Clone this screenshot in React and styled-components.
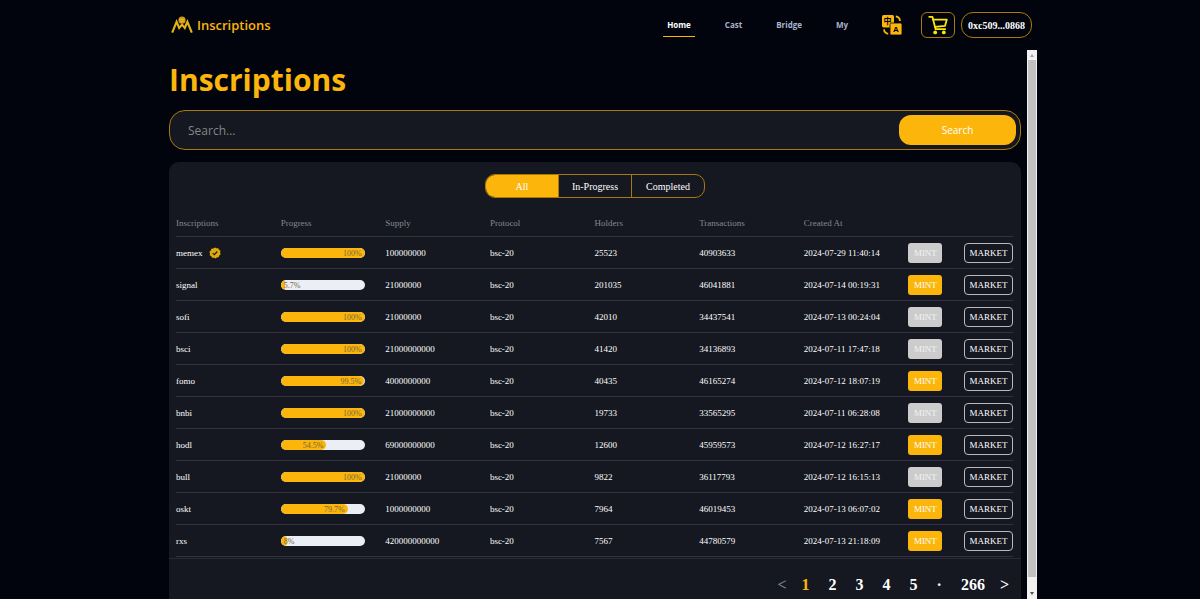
import React, { useState } from 'react'
import styled, { createGlobalStyle } from 'styled-components'

const amber = '#fbb50b'
const amberLine = '#a87a0c'
const sans = "'Open Sans', 'Noto Sans', sans-serif"
const serif = "'Liberation Serif', 'Times New Roman', serif"

const rows = [
  { name: 'memex', verified: true, progress: 100, supply: '100000000', holders: 25523, transactions: 40903633, createdAt: '2024-07-29 11:40:14' },
  { name: 'signal', progress: 5.7, supply: '21000000', holders: 201035, transactions: 46041881, createdAt: '2024-07-14 00:19:31' },
  { name: 'sofi', progress: 100, supply: '21000000', holders: 42010, transactions: 34437541, createdAt: '2024-07-13 00:24:04' },
  { name: 'bsci', progress: 100, supply: '21000000000', holders: 41420, transactions: 34136893, createdAt: '2024-07-11 17:47:18' },
  { name: 'fomo', progress: 99.5, supply: '4000000000', holders: 40435, transactions: 46165274, createdAt: '2024-07-12 18:07:19' },
  { name: 'bnbi', progress: 100, supply: '21000000000', holders: 19733, transactions: 33565295, createdAt: '2024-07-11 06:28:08' },
  { name: 'hodl', progress: 54.5, supply: '69000000000', holders: 12600, transactions: 45959573, createdAt: '2024-07-12 16:27:17' },
  { name: 'bull', progress: 100, supply: '21000000', holders: 9822, transactions: 36117793, createdAt: '2024-07-12 16:15:13' },
  { name: 'oskt', progress: 79.7, supply: '1000000000', holders: 7964, transactions: 46019453, createdAt: '2024-07-13 06:07:02' },
  { name: 'rxs', progress: 8, supply: '420000000000', holders: 7567, transactions: 44780579, createdAt: '2024-07-13 21:18:09' }
]

const columns = ['Inscriptions', 'Progress', 'Supply', 'Protocol', 'Holders', 'Transactions', 'Created At']
const links = ['Home', 'Cast', 'Bridge', 'My']
const tabs = ['All', 'In-Progress', 'Completed']
const pages = ['1', '2', '3', '4', '5', '·', '266']

const LogoIcon = () => (
  <svg width="22" height="18" viewBox="0 0 22 18" aria-hidden="true">
    <path
      d="M1.2 16.6 L5.6 5.8 L8.2 12 L11 8.6 L13.8 12 L16.4 5.8 L20.8 16.6"
      fill="none"
      stroke="#e9b213"
      strokeWidth="2.1"
    />
    <circle cx="11" cy="4.2" r="3.6" fill="#c99a1c" />
    <path d="M8.6 3.4h4.8M9.4 5.4h3.4" stroke="#f4c532" strokeWidth="0.8" />
  </svg>
)

const TranslateIcon = () => (
  <svg width="22" height="22" viewBox="0 0 22 22" aria-hidden="true">
    <rect x="1" y="1" width="12" height="12.4" rx="1.6" fill={amber} />
    <rect x="9" y="9" width="12" height="12" rx="1.6" fill={amber} stroke="#02040d" strokeWidth="0.8" />
    <text x="6.6" y="10" fontSize="8" fontWeight="700" textAnchor="middle" fill="#02040d" fontFamily="'Noto Sans CJK SC', sans-serif">中</text>
    <text x="15" y="18.2" fontSize="8" fontWeight="700" textAnchor="middle" fill="#02040d" fontFamily="'Liberation Sans', sans-serif">A</text>
    <path d="M14.8 2.4a5 5 0 0 1 4.2 4.6M3 15.4a5 5 0 0 0 4.2 4.4" fill="none" stroke={amber} strokeWidth="1.8" />
  </svg>
)

const CartIcon = () => (
  <svg width="20" height="20" viewBox="0 0 20 20" aria-hidden="true">
    <g fill="none" stroke="#fbe60b" strokeWidth="1.8" strokeLinejoin="round" strokeLinecap="round">
      <path d="M1.2 1.8h3.2l3.2 12.4h9.6" />
      <path d="M5 4.6h13.8l-1.8 6.3L7 11.8" />
    </g>
    <circle cx="7.2" cy="17.4" r="1.9" fill="#fbe60b" />
    <circle cx="15.8" cy="17.4" r="1.9" fill="#fbe60b" />
  </svg>
)

const VerifiedIcon = () => (
  <svg width="12" height="12" viewBox="0 0 12 12" role="img" aria-label="Verified">
    <path
      d="M6 0.4 7.5 1.3 9.3 1.2 10 2.8 11.5 3.8 11.1 5.6 11.6 7.4 10.2 8.5 9.6 10.2 7.8 10.4 6.4 11.6 4.8 10.7 3 10.8 2.3 9.2 0.7 8.2 1 6.4 0.4 4.7 1.8 3.5 2.4 1.8 4.2 1.6Z"
      fill="#dfaa0b"
    />
    <path d="M3.7 6.2 5.3 7.7 8.3 4.5" fill="none" stroke="#151721" strokeWidth="1.1" />
  </svg>
)

const InscriptionRow = ({ row }) => (
  <tr>
    <Cell>
      <Name>
        {row.name}
        {row.verified && <VerifiedIcon />}
      </Name>
    </Cell>
    <Cell>
      <Track>
        <Fill style={{ width: `${row.progress}%` }}>
          <Percent>{row.progress}%</Percent>
        </Fill>
      </Track>
    </Cell>
    <Cell>{row.supply}</Cell>
    <Cell>bsc-20</Cell>
    <Cell>{row.holders}</Cell>
    <Cell>{row.transactions}</Cell>
    <Cell>{row.createdAt}</Cell>
    <Cell>
      <Actions>
        <MintButton disabled={row.progress === 100}>MINT</MintButton>
        <MarketButton>MARKET</MarketButton>
      </Actions>
    </Cell>
  </tr>
)

const App = () => {
  const [tab, setTab] = useState('All')
  const [page, setPage] = useState('1')

  return (
    <Page>
      <GlobalStyle />
      <Header>
        <Brand href="#">
          <LogoIcon />
          Inscriptions
        </Brand>
        <Nav>
          {links.map(link => (
            <NavLink key={link} href="#" $active={link === 'Home'}>
              {link}
            </NavLink>
          ))}
        </Nav>
        <IconButton aria-label="Language">
          <TranslateIcon />
        </IconButton>
        <CartButton aria-label="Cart">
          <CartIcon />
        </CartButton>
        <Wallet>0xc509...0868</Wallet>
      </Header>

      <Body>
        <Content>
          <Title>Inscriptions</Title>
          <SearchBar>
            <SearchInput type="text" placeholder="Search..." aria-label="Search inscriptions" />
            <SearchButton>Search</SearchButton>
          </SearchBar>

          <Panel>
            <Tabs>
              {tabs.map(name => (
                <Tab key={name} $active={name === tab} onClick={() => setTab(name)}>
                  {name}
                </Tab>
              ))}
            </Tabs>
            <TableWrap>
              <Table>
                <thead>
                  <tr>
                    {columns.map(column => (
                      <HeadCell key={column}>{column}</HeadCell>
                    ))}
                    <HeadCell aria-label="Actions" />
                  </tr>
                </thead>
                <tbody>
                  {rows.map(row => (
                    <InscriptionRow key={row.name} row={row} />
                  ))}
                </tbody>
              </Table>
            </TableWrap>
            <Pagination>
              <PageButton $muted aria-label="Previous page">&lt;</PageButton>
              <PageList>
                {pages.map(item => (
                  <PageButton key={item} $active={item === page} onClick={() => setPage(item)}>
                    {item}
                  </PageButton>
                ))}
              </PageList>
              <PageButton aria-label="Next page">&gt;</PageButton>
            </Pagination>
          </Panel>
        </Content>
        <Scrollbar>
          <Arrow $muted />
          <Thumb />
          <Arrow $down />
        </Scrollbar>
      </Body>
    </Page>
  )
}

const GlobalStyle = createGlobalStyle`
  * {
    box-sizing: border-box;
  }

  body {
    margin: 0;
    background: #02040d;
    color: #fff;
    font-family: ${serif};
  }

  button {
    margin: 0;
    padding: 0;
    border: 0;
    background: none;
    color: inherit;
    font-family: inherit;
    cursor: pointer;
  }
`

const Page = styled.div`
  display: flex;
  flex-direction: column;
  width: 100%;
  max-width: 874px;
  height: 100vh;
  margin: 0 auto;
`

const Header = styled.header`
  display: flex;
  align-items: center;
  flex: none;
  height: 50px;
  padding: 0 5px 0 8px;
`

const Brand = styled.a`
  display: flex;
  align-items: center;
  gap: 4px;
  color: ${amber};
  font: 600 13px ${sans};
  text-decoration: none;
`

const Nav = styled.nav`
  display: flex;
  gap: 26px;
  margin-left: auto;
`

const NavLink = styled.a`
  padding: 0 4px;
  border-bottom: 1px solid ${({ $active }) => ($active ? amber : 'transparent')};
  color: ${({ $active }) => ($active ? '#fff' : '#a9b4cc')};
  font: 700 8px/22px ${sans};
  text-decoration: none;
`

const IconButton = styled.button`
  display: flex;
  margin-left: 29px;
`

const CartButton = styled.button`
  display: flex;
  align-items: center;
  justify-content: center;
  width: 34px;
  height: 26px;
  margin-left: 18px;
  border: 1px solid ${amberLine};
  border-radius: 6px;
`

const Wallet = styled.button`
  height: 26px;
  margin-left: 6px;
  padding: 0 6px;
  border: 1px solid ${amberLine};
  border-radius: 12px;
  font-size: 10px;
  font-weight: 700;
`

const Body = styled.div`
  display: flex;
  flex: 1;
  min-height: 0;
`

const Content = styled.main`
  flex: 1;
  min-width: 0;
  padding: 0 6px;
  overflow: hidden;
`

const Title = styled.h1`
  margin: 0;
  color: ${amber};
  font: 700 30px/60px ${sans};
`

const SearchBar = styled.div`
  display: flex;
  align-items: center;
  height: 40px;
  padding: 0 4px 0 18px;
  border: 1px solid ${amberLine};
  border-radius: 16px;
  background: #151721;
`

const SearchInput = styled.input`
  flex: 1;
  min-width: 0;
  padding: 0;
  border: 0;
  outline: 0;
  background: none;
  color: #fff;
  font: 400 12px ${sans};

  &::placeholder {
    color: #858689;
    opacity: 1;
  }
`

const SearchButton = styled.button`
  width: 117px;
  height: 30px;
  border-radius: 12px;
  background: ${amber};
  font: 400 10px ${sans};
`

const Panel = styled.section`
  margin-top: 12px;
  padding-top: 12px;
  border-radius: 10px 10px 0 0;
  background: #151721;
`

const Tabs = styled.div`
  display: flex;
  width: 220px;
  height: 24px;
  margin: 0 auto;
  border: 1px solid ${amberLine};
  border-radius: 10px;
  overflow: hidden;
`

const Tab = styled.button`
  flex: 1;
  background: ${({ $active }) => ($active ? amber : 'none')};
  font-size: 10px;

  & + & {
    border-left: 1px solid ${amberLine};
  }
`

const TableWrap = styled.div`
  padding: 12px 8px 1px 7px;
  border-bottom: 1px solid #282a34;
`

const Table = styled.table`
  width: 100%;
  border-spacing: 0;
  table-layout: fixed;
`

const HeadCell = styled.th`
  height: 27px;
  padding: 0;
  border-bottom: 1px solid #31333d;
  color: #858892;
  font-size: 9px;
  font-weight: 400;
  text-align: left;
`

const Cell = styled.td`
  height: 32px;
  padding: 0;
  border-bottom: 1px solid #31333d;
  font-size: 9px;
`

const Name = styled.div`
  display: flex;
  align-items: center;
  gap: 6px;
`

const Track = styled.div`
  width: 84px;
  height: 10px;
  border-radius: 5px;
  background: #ebeef5;
  overflow: hidden;
`

const Fill = styled.div`
  display: flex;
  height: 100%;
  border-radius: 5px;
  background: ${amber};
`

const Percent = styled.span`
  min-width: 100%;
  padding: 0 3px;
  color: #75673f;
  font-size: 8px;
  line-height: 11px;
  text-align: right;
`

const Actions = styled.div`
  display: flex;
  justify-content: space-between;
`

const MintButton = styled.button`
  width: 34px;
  height: 20px;
  border-radius: 3px;
  background: ${amber};
  font-size: 9px;

  &:disabled {
    background: #ccc;
    color: #f2f2f2;
  }
`

const MarketButton = styled.button`
  width: 49px;
  height: 20px;
  border: 1px solid #b9bac0;
  border-radius: 4px;
  font-size: 9px;
`

const Pagination = styled.nav`
  display: flex;
  justify-content: flex-end;
  gap: 15px;
  padding: 17px 12px 40px;
`

const PageList = styled.div`
  display: flex;
  gap: 19px;
`

const PageButton = styled.button`
  color: ${({ $active, $muted }) => ($active ? amber : $muted ? '#7d808a' : '#fff')};
  font-size: 16px;
  font-weight: 700;
`

const Scrollbar = styled.div`
  display: flex;
  flex-direction: column;
  flex: none;
  width: 10px;
  background: #f1f1f1;
`

const Arrow = styled.div`
  display: flex;
  align-items: center;
  justify-content: center;
  height: ${({ $down }) => ($down ? '22px' : '10px')};
  padding-top: ${({ $down }) => ($down ? '10px' : 0)};

  &::before {
    content: '';
    border: 2px solid transparent;
    border-top: ${({ $down }) => ($down ? '3px solid #505050' : 0)};
    border-bottom: ${({ $down }) => ($down ? 0 : '3px solid #a3a3a3')};
  }
`

const Thumb = styled.div`
  flex: 1;
  margin: 0 1px;
  background: #c1c1c1;
`

export default App
